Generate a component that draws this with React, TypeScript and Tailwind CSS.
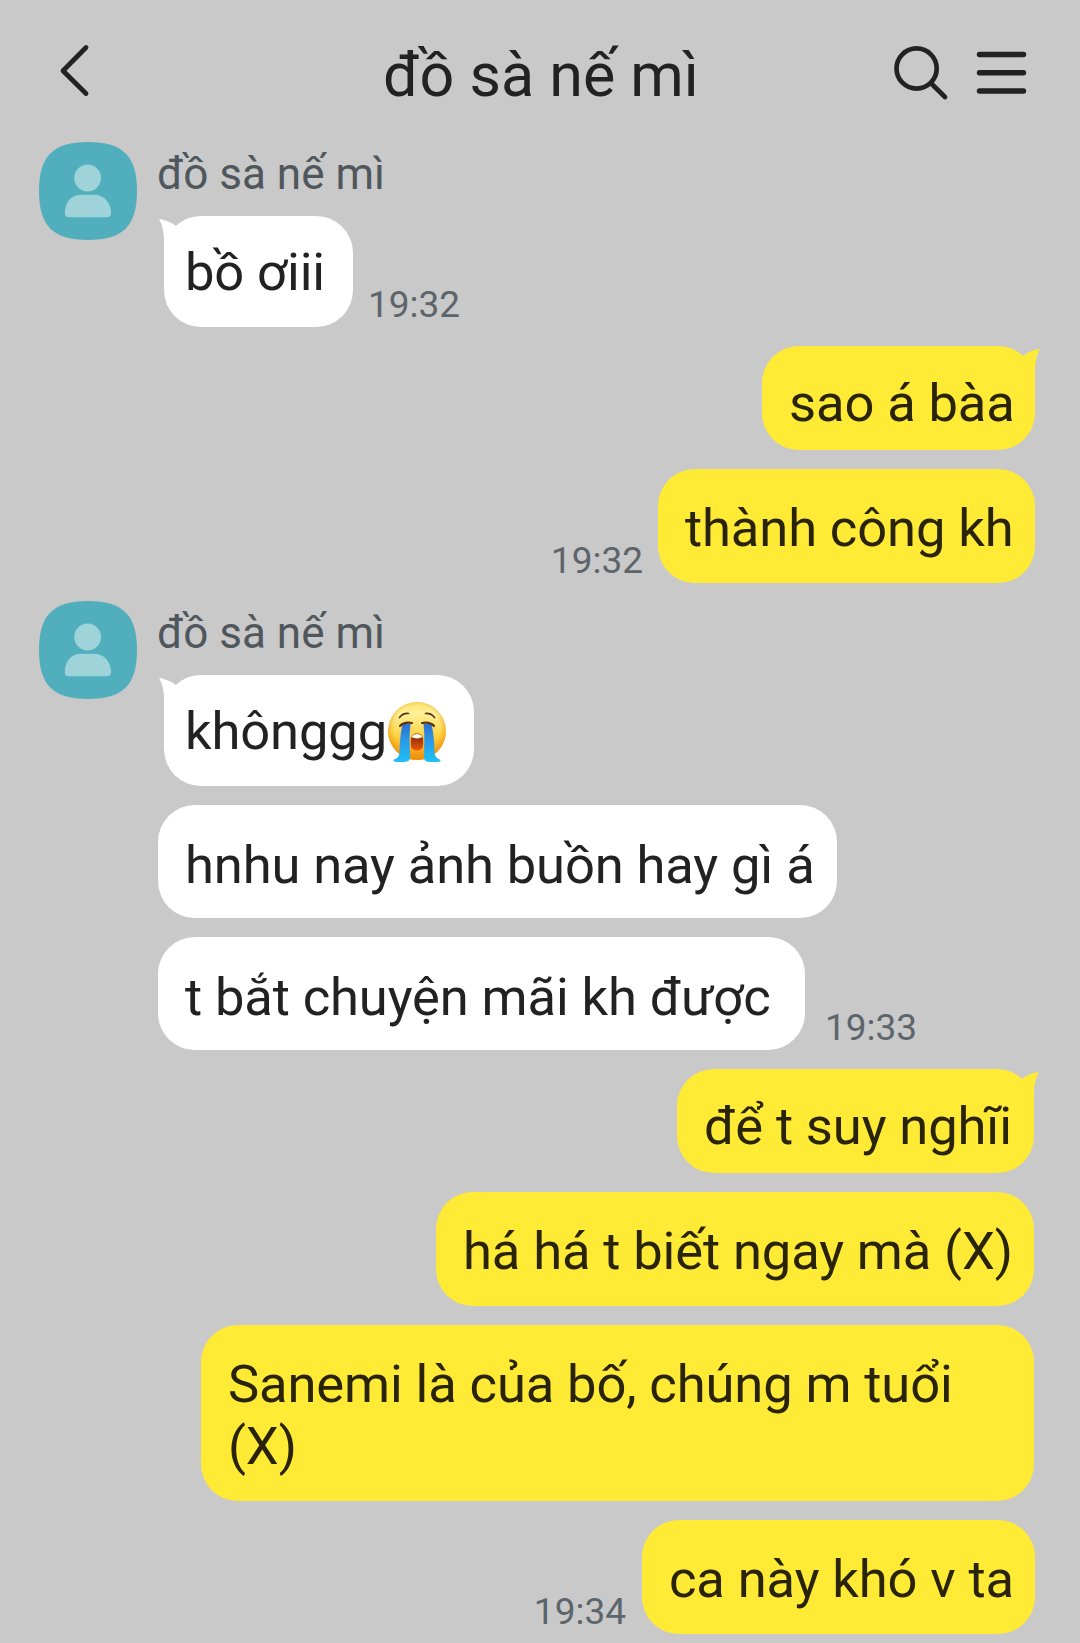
import type { ReactNode } from "react";

function TailLeft() {
  return (
    <svg className="absolute -left-[5px] top-0" width="45" height="45" viewBox="-5 0 45 45" fill="#ffffff">
      <path d="M0 40 V24 C0 16 -1.6 9 -4.7 3.6 Q-4.9 2.8 -4 3 C1 4 7 6 12 10 L30 30 L30 40Z" />
    </svg>
  );
}

function TailRight() {
  return (
    <svg className="absolute -right-[5px] top-0" width="45" height="45" viewBox="-40 0 45 45" fill="#ffea35">
      <path d="M0 40 V24 C0 16 1.6 9 4.7 3.6 Q4.9 2.8 4 3 C-1 3.4 -7 6 -12 10 L-30 30 L-30 40Z" />
    </svg>
  );
}

function Bubble({ mine, tail, className, children }: { mine?: boolean; tail?: boolean; className: string; children: ReactNode }) {
  return (
    <div
      className={`relative shrink-0 rounded-[37px] text-[52.5px] leading-[62px] tracking-[-0.12px] ${mine ? "bg-[#ffea35] text-[#2a2406]" : "bg-white text-[#222222]"} ${className}`}
    >
      {tail && (mine ? <TailRight /> : <TailLeft />)}
      <div className="relative whitespace-nowrap">{children}</div>
    </div>
  );
}

function Time({ className, children }: { className: string; children: ReactNode }) {
  return <span className={`text-[37px] leading-[44px] text-[#5c656b] ${className}`}>{children}</span>;
}

function Avatar() {
  return (
    <svg className="shrink-0" width="98" height="98" viewBox="0 0 98 98">
      <path d="M49 0 C84 0 98 14 98 49 C98 84 84 98 49 98 C14 98 0 84 0 49 C0 14 14 0 49 0Z" fill="#50aebd" />
      <circle cx="48.6" cy="36" r="13.4" fill="#9fd3da" />
      <path d="M42 52.8 H55 C65 52.8 72 61 72 71 Q72 75.3 67.7 75.3 H30 Q25.8 75.3 25.8 71 C25.8 61 32 52.8 42 52.8Z" fill="#9fd3da" />
    </svg>
  );
}

function CryingFace() {
  return (
    <svg className="absolute left-[202px] top-px" width="60" height="62" viewBox="0 0 60 62" role="img" aria-label="😭">
      <defs>
        <linearGradient id="face" x1="0" y1="0" x2="0" y2="1">
          <stop offset="0" stopColor="#fde26a" />
          <stop offset="0.2" stopColor="#fff09a" />
          <stop offset="0.6" stopColor="#fdd23f" />
          <stop offset="1" stopColor="#f58a0a" />
        </linearGradient>
        <radialGradient id="rim" cx="0.5" cy="0.45" r="0.53">
          <stop offset="0.75" stopColor="#f0a010" stopOpacity="0" />
          <stop offset="1" stopColor="#e99412" stopOpacity="0.75" />
        </radialGradient>
        <linearGradient id="tears" x1="0" y1="0" x2="0" y2="1">
          <stop offset="0" stopColor="#2d6fd0" />
          <stop offset="0.4" stopColor="#2b96e6" />
          <stop offset="1" stopColor="#1fc0f5" />
        </linearGradient>
        <linearGradient id="mouth" x1="0" y1="0" x2="0" y2="1">
          <stop offset="0" stopColor="#7a2408" />
          <stop offset="1" stopColor="#e8590c" />
        </linearGradient>
      </defs>
      <circle cx="30" cy="30" r="29" fill="url(#face)" />
      <circle cx="30" cy="30" r="29" fill="url(#rim)" />
      <path d="M12.5 16.5 Q16 12 21.5 12.5 M38.5 12.5 Q44 12 47.5 16.5" fill="none" stroke="#5a3410" strokeWidth="1.7" strokeLinecap="round" />
      <path d="M15.5 23 L23.5 23 C22 35 23 46 23 57 Q23 61 16 61 H10 Q5 60.5 7 58.5 Q12 57 12.5 52 C12.5 42 13.5 32 15.5 23Z" fill="url(#tears)" />
      <path d="M44.5 23 L36.5 23 C38 35 37 46 37 57 Q37 61 44 61 H50 Q55 60.5 53 58.5 Q48 57 47.5 52 C47.5 42 46.5 32 44.5 23Z" fill="url(#tears)" />
      <path d="M13 25 Q17 20.5 25 22 M47 25 Q43 20.5 35 22" fill="none" stroke="#5a3410" strokeWidth="2.2" strokeLinecap="round" />
      <path d="M23.8 40 C23.8 35 26 32.5 30 32.5 S36.2 35 36.2 40 V43 Q36.2 49.5 30 49.5 T23.8 43Z" fill="url(#mouth)" />
      <path d="M24.6 36.3 Q26 33 30 33 T35.4 36.3 Q30 38.6 24.6 36.3Z" fill="#fff8ec" />
    </svg>
  );
}

function Name() {
  return <div className="-ml-px h-[74px] pt-[2px] text-[44px] leading-[60px] text-[#4f575c]">đồ sà nế mì</div>;
}

export default function App() {
  return (
    <div className="h-[1643px] w-[1080px] overflow-hidden bg-[#c9c9c9] font-['Roboto',sans-serif]">
      <header className="flex h-[142px] items-start justify-between pl-[58px] pr-[52px] pt-[40px] text-[#222222]">
        <svg width="140" height="64" viewBox="0 0 140 64" fill="none" stroke="currentColor" strokeWidth="4.8" strokeLinecap="round" strokeLinejoin="round">
          <path d="M28 7.5 L5 30.7 L28 53.5" />
        </svg>
        <h1 className="-ml-[5px] text-[61px] leading-[71px]">đồ sà nế mì</h1>
        <div className="flex pt-[4px]">
          <svg width="60" height="60" viewBox="0 0 60 60" fill="none" stroke="currentColor" strokeWidth="4.7" strokeLinecap="round">
            <circle cx="27.6" cy="24.5" r="20.1" />
            <path d="M42 39.3 L56 53" />
          </svg>
          <svg className="ml-[25px]" width="54" height="60" viewBox="0 0 54 60" fill="none" stroke="currentColor" strokeWidth="5.4" strokeLinecap="round">
            <path d="M5.5 10.5 H49.5 M5.5 28.8 H49.5 M5.5 47 H49.5" />
          </svg>
        </div>
      </header>

      <main className="flex flex-col pl-[39px] pr-[46px]">
        <section className="flex h-[204px] gap-[21px]">
          <Avatar />
          <div>
            <Name />
            <div className="ml-[6px] flex">
              <Bubble tail className="h-[111px] w-[189px] pl-[21px] pt-[25px]">bồ ơiii</Bubble>
              <Time className="ml-[15px] mt-[67px]">19:32</Time>
            </div>
          </div>
        </section>

        <section className="-mr-px flex flex-col items-end">
          <Bubble mine tail className="h-[104px] w-[273px] pl-[27px] pt-[26px]">sao á bàa</Bubble>
          <div className="mt-[19px] flex">
            <Time className="mr-[15px] mt-[70px]">19:32</Time>
            <Bubble mine className="h-[114px] w-[377px] pl-[27px] pt-[28px]">thành công kh</Bubble>
          </div>
        </section>

        <section className="mt-[18px] flex gap-[21px]">
          <Avatar />
          <div>
            <Name />
            <Bubble tail className="ml-[6px] h-[111px] w-[310px] pl-[21px] pt-[25px]">
              khônggg
              <CryingFace />
            </Bubble>
            <Bubble className="mt-[19px] h-[113px] w-[679px] pl-[27px] pt-[29px]">hnhu nay ảnh buồn hay gì á</Bubble>
            <div className="mt-[19px] flex">
              <Bubble className="h-[113px] w-[647px] pl-[27px] pt-[29px]">t bắt chuyện mãi kh được</Bubble>
              <Time className="ml-[20px] mt-[69px]">19:33</Time>
            </div>
          </div>
        </section>

        <section className="mt-[19px] flex flex-col items-end">
          <Bubble mine tail className="h-[104px] w-[357px] pl-[27px] pt-[26px]">để t suy nghĩi</Bubble>
          <Bubble mine className="mt-[19px] h-[114px] w-[598px] pl-[27px] pt-[28px]">há há t biết ngay mà (X)</Bubble>
          <Bubble mine className="mt-[19px] h-[176px] w-[833px] pl-[27px] pt-[28px]">
            Sanemi là của bố, chúng m tuổi
            <br />
            (X)
          </Bubble>
          <div className="-mr-px mt-[19px] flex">
            <Time className="mr-[16px] mt-[70px]">19:34</Time>
            <Bubble mine className="h-[114px] w-[393px] pl-[27px] pt-[28px]">ca này khó v ta</Bubble>
          </div>
        </section>
      </main>
    </div>
  );
}
